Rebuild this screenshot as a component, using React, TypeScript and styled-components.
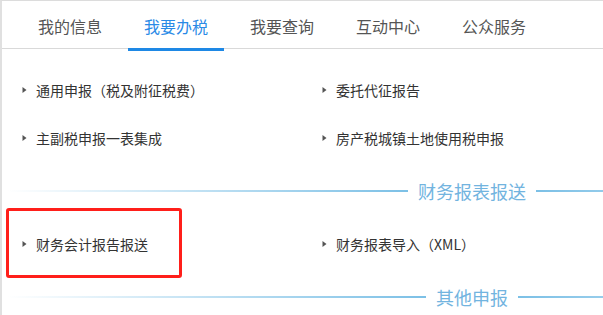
import * as React from 'react';
import styled, { createGlobalStyle } from 'styled-components';

const GlobalStyle = createGlobalStyle`
  html, body {
    margin: 0;
    padding: 0;
    background: #fff;
    overflow: hidden;
  }
  body {
    font-family: "Microsoft YaHei", "Noto Sans CJK SC", "Noto Sans", sans-serif;
    text-spacing-trim: space-all;
  }
`;

const tabs = ['我的信息', '我要办税', '我要查询', '互动中心', '公众服务'];

const sections = [
  {
    title: null,
    items: ['通用申报（税及附征税费）', '委托代征报告', '主副税申报一表集成', '房产税城镇土地使用税申报'],
  },
  {
    title: '财务报表报送',
    items: ['财务会计报告报送', '财务报表导入（XML）'],
  },
  {
    title: '其他申报',
    items: [],
  },
];

const Arrow = () => (
  <svg width="5" height="8" viewBox="0 0 5 8">
    <path d="M0.5 1 L4.5 4 L0.5 7 Z" fill="#555" />
  </svg>
);

export default function App() {
  return (
    <>
      <GlobalStyle />
      <Panel>
        <TabBar>
          {tabs.map((t, i) => (
            <Tab key={t} active={i === 1}>{t}</Tab>
          ))}
        </TabBar>
        <Content>
          {sections.map((s, si) => (
            <Section key={si}>
              {s.title && (
                <SectionHeader>
                  <Line side="left" />
                  <SectionTitle>{s.title}</SectionTitle>
                  <Line side="right" />
                </SectionHeader>
              )}
              {s.items.length > 0 && (
                <ItemGrid>
                  {s.items.map((item) => (
                    <Item key={item}>
                      <Arrow />
                      <ItemText>{item}</ItemText>
                      {item === '财务会计报告报送' && <Highlight />}
                    </Item>
                  ))}
                </ItemGrid>
              )}
            </Section>
          ))}
        </Content>
      </Panel>
    </>
  );
}

const Panel = styled.div`
  width: 100%;
  overflow: hidden;
  border-top: 1px solid #dcdcdc;
  border-left: 2px solid #e0e0e0;
  box-sizing: border-box;
`;

const TabBar = styled.div`
  display: flex;
  gap: 10px;
  height: 47px;
  padding-left: 20px;
  border-bottom: 1px solid #d9d9d9;
`;

const Tab = styled.div<{ active?: boolean }>`
  flex: none;
  width: 96px;
  height: 50px;
  margin-bottom: -2px;
  box-sizing: border-box;
  text-align: center;
  line-height: 50px;
  font-size: 16px;
  color: ${(p) => (p.active ? '#2a8ae6' : '#555')};
  border-bottom: 3px solid ${(p) => (p.active ? '#1e88e5' : 'transparent')};
`;

const Content = styled.div`
  padding-top: 17px;
`;

const Section = styled.div``;

const ItemGrid = styled.div`
  display: grid;
  grid-template-columns: repeat(2, 300px);
  padding-left: 20px;
  margin-bottom: 14px;
`;

const Item = styled.div`
  position: relative;
  display: flex;
  align-items: center;
  gap: 9px;
  height: 48px;
  font-size: 14px;
  color: #333;
`;

const ItemText = styled.span`
  line-height: 20px;
`;

const Highlight = styled.div`
  position: absolute;
  left: -16px;
  top: -12px;
  width: 176px;
  height: 70px;
  border: 3px solid #ff1f1a;
  border-radius: 3px;
  box-sizing: border-box;
  pointer-events: none;
`;

const SectionHeader = styled.div`
  display: flex;
  align-items: center;
  gap: 10px;
  width: 930px;
  height: 30px;
  margin: 12px 0 14px 5px;
`;

const Line = styled.div<{ side: 'left' | 'right' }>`
  flex: 1;
  height: 2px;
  background: linear-gradient(
    ${(p) => (p.side === 'left' ? 'to right' : 'to left')},
    rgba(124, 192, 230, 0) 0%,
    #7cc0e6 100%
  );
`;

const SectionTitle = styled.div`
  font-size: 18px;
  color: #72b4df;
  line-height: 30px;
`;
